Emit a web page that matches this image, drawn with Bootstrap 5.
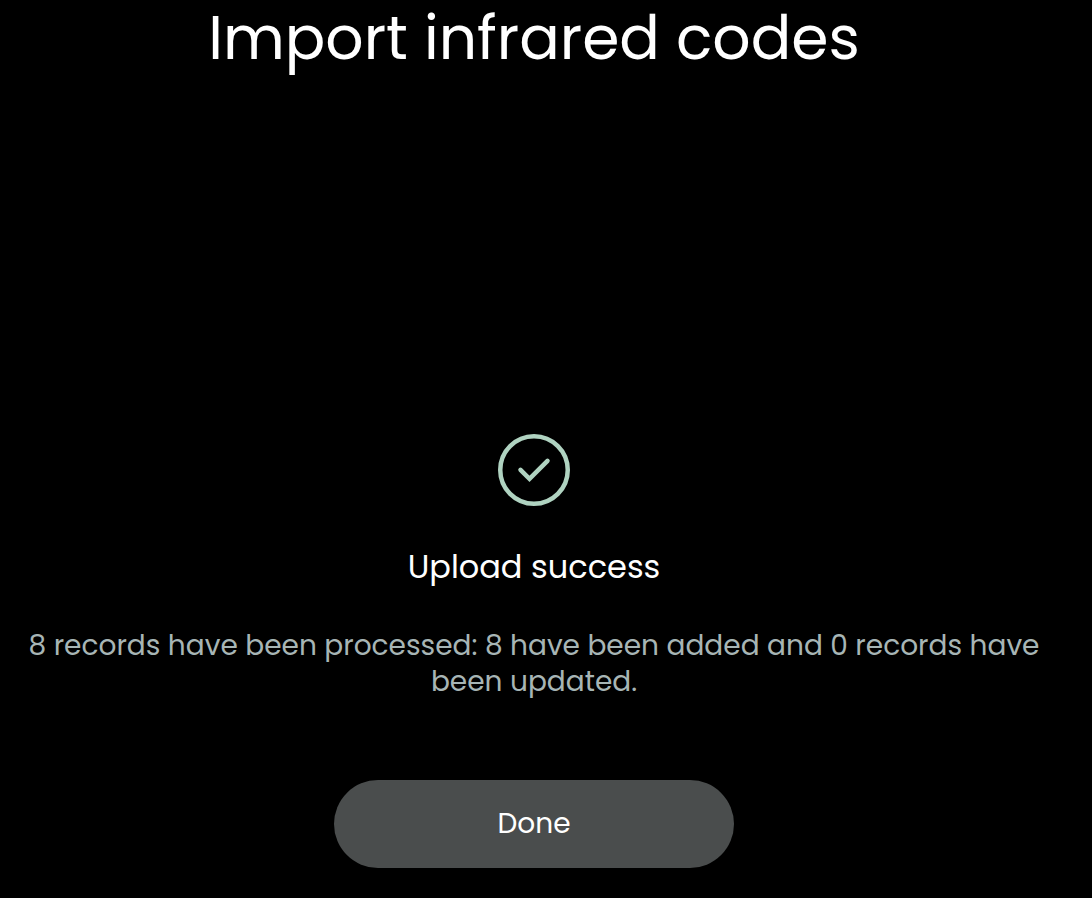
<!DOCTYPE html>
<html lang="en">
<head>
<meta charset="utf-8">
<meta name="viewport" content="width=device-width, initial-scale=1">
<title>Import infrared codes</title>
<link href="https://cdn.jsdelivr.net/npm/bootstrap@5.3.0/dist/css/bootstrap.min.css" rel="stylesheet">
<style>
body { background: #000; color: #fff; font-family: Poppins, Inter, sans-serif; }
.import-screen { padding: 0 44px 30px 20px; }
.screen-title { font-size: 60px; line-height: 76px; font-weight: 400; }
.result { padding-top: 358px; }
.result-icon { width: 72px; height: 72px; }
.result-title { font-size: 32px; line-height: 40px; font-weight: 400; margin-top: 41px; }
.result-text { font-size: 28px; line-height: 36px; color: #a7b5b5; margin-top: 41px; }
.done-btn { --bs-btn-color: #fff; --bs-btn-bg: #4a4d4d; --bs-btn-hover-color: #fff; --bs-btn-hover-bg: #565b5b; width: 400px; height: 88px; font-size: 28px; margin-top: 80px; }
</style>
</head>
<body>
<main class="import-screen d-flex flex-column align-items-center text-center min-vh-100">
  <h1 class="screen-title mb-0">Import infrared codes</h1>
  <section class="result d-flex flex-column align-items-center">
    <svg class="result-icon" viewBox="0 0 72 72" fill="none" stroke="#b0d3c1" stroke-width="4.5" stroke-linecap="round" stroke-linejoin="miter" aria-hidden="true">
      <circle cx="36" cy="36" r="33.75"/>
      <path d="M22.5 35.8l9 9L49.5 26.8"/>
    </svg>
    <h2 class="result-title mb-0">Upload success</h2>
    <p class="result-text mb-0">8 records have been processed: 8 have been added and 0 records have been updated.</p>
    <button type="button" class="btn done-btn rounded-pill border-0 mw-100">Done</button>
  </section>
</main>
<script src="https://cdn.jsdelivr.net/npm/bootstrap@5.3.0/dist/js/bootstrap.bundle.min.js"></script>
</body>
</html>
